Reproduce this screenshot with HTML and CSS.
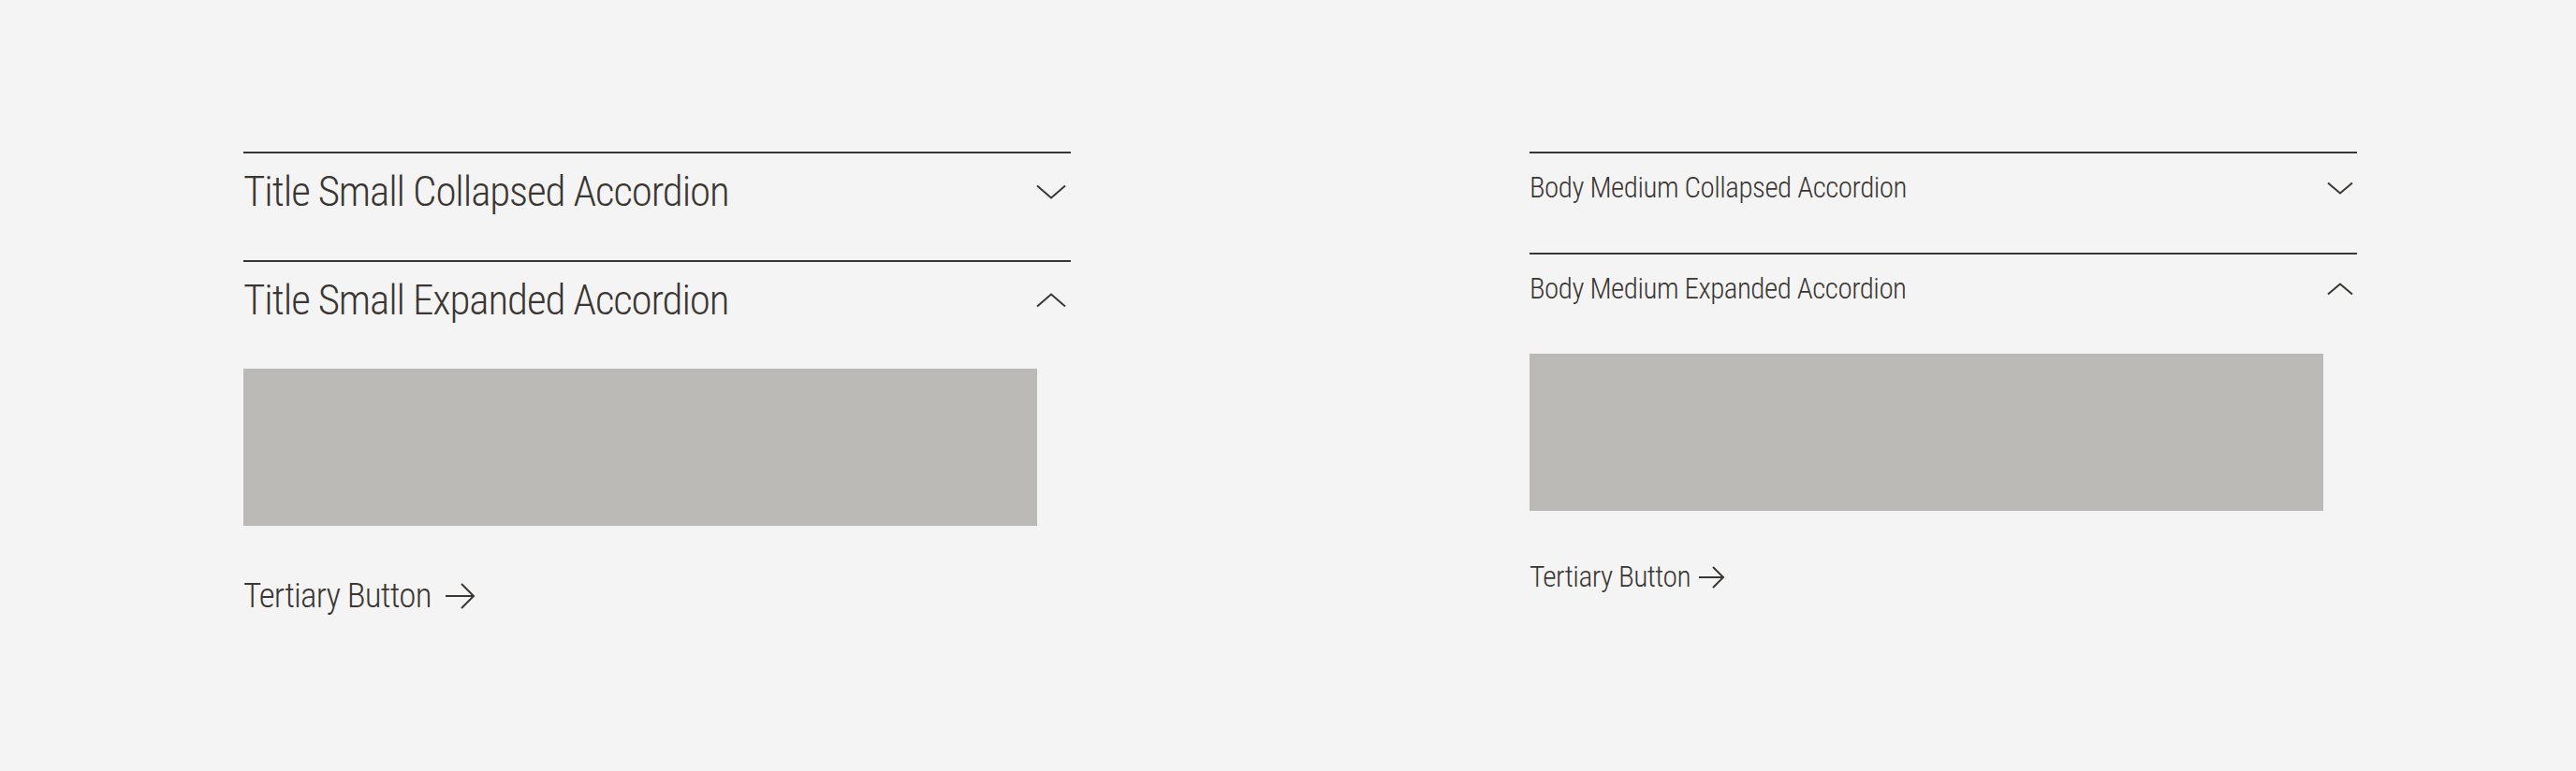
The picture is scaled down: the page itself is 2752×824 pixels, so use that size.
FILE: index.html
```html
<!DOCTYPE html>
<html lang="en">
<head>
    <meta charset="UTF-8">
    <meta name="viewport" content="width=device-width, initial-scale=1.0">
    <title>Accordion Variants</title>
    <link rel="stylesheet" href="styles.css">
</head>
<body>
    <main class="page">
        <section class="column column-title">
            <div class="accordion">
                <div class="accordion-item">
                    <div class="accordion-header">
                        <span class="accordion-label">Title Small Collapsed Accordion</span>
                        <svg class="chevron" width="32" height="16" viewBox="0 0 32 16">
                            <path d="M1 1.5 L16 14.5 L31 1.5" />
                        </svg>
                    </div>
                </div>
                <div class="accordion-item is-open">
                    <div class="accordion-header">
                        <span class="accordion-label">Title Small Expanded Accordion</span>
                        <svg class="chevron" width="32" height="16" viewBox="0 0 32 16">
                            <path d="M1 14.5 L16 1.5 L31 14.5" />
                        </svg>
                    </div>
                    <div class="accordion-panel">
                        <div class="placeholder"></div>
                    </div>
                </div>
            </div>
            <a class="tertiary-button" href="#">
                <span>Tertiary Button</span>
                <svg class="arrow" width="32" height="28" viewBox="0 0 32 28">
                    <path d="M0 14 H30 M17 1 L30 14 L17 27" />
                </svg>
            </a>
        </section>

        <section class="column column-body">
            <div class="accordion">
                <div class="accordion-item">
                    <div class="accordion-header">
                        <span class="accordion-label">Body Medium Collapsed Accordion</span>
                        <svg class="chevron" width="28" height="14" viewBox="0 0 28 14">
                            <path d="M1 1.5 L14 12.5 L27 1.5" />
                        </svg>
                    </div>
                </div>
                <div class="accordion-item is-open">
                    <div class="accordion-header">
                        <span class="accordion-label">Body Medium Expanded Accordion</span>
                        <svg class="chevron" width="28" height="14" viewBox="0 0 28 14">
                            <path d="M1 12.5 L14 1.5 L27 12.5" />
                        </svg>
                    </div>
                    <div class="accordion-panel">
                        <div class="placeholder"></div>
                    </div>
                </div>
            </div>
            <a class="tertiary-button" href="#">
                <span>Tertiary Button</span>
                <svg class="arrow" width="28" height="24" viewBox="0 0 28 24">
                    <path d="M0 12 H26 M15 1 L26 12 L15 23" />
                </svg>
            </a>
        </section>
    </main>
</body>
</html>
```

FILE: styles.css
```css
body {
    margin: 0;
    background-color: #f4f4f4;
    color: #3a3633;
    font-family: "Roboto Condensed", "Open Sans", sans-serif;
    font-stretch: 75%;
    font-weight: 300;
}

.page {
    display: flex;
    gap: 490px;
    padding: 162px 234px 0 260px;
}

.column {
    width: 884px;
    display: flex;
    flex-direction: column;
    align-items: flex-start;
}

.accordion {
    width: 100%;
}

.accordion-item {
    border-top: 2px solid #3a3633;
}

.accordion-header {
    display: flex;
    justify-content: space-between;
    align-items: center;
}

.chevron,
.arrow {
    fill: none;
    stroke: #3a3633;
    stroke-width: 2;
}

.placeholder {
    width: 848px;
    height: 168px;
    background-color: #bbbab6;
}

.tertiary-button {
    display: inline-flex;
    align-items: center;
    color: #3a3633;
    text-decoration: none;
    margin-top: 51px;
}

/* Title small variant */
.column-title .accordion-header {
    padding: 13px 0 45px;
    font-size: 45px;
    line-height: 56px;
    letter-spacing: -1.1px;
}

.column-title .chevron {
    margin-right: 5px;
}

.column-title .tertiary-button {
    font-size: 37px;
    line-height: 48px;
    letter-spacing: -0.8px;
    gap: 15px;
}

/* Body medium variant */
.column-body .accordion-header {
    padding: 17px 0 49px;
    font-size: 31px;
    line-height: 40px;
    letter-spacing: -0.5px;
}

.column-body .chevron {
    margin-right: 4px;
}

.column-body .tertiary-button {
    font-size: 31.5px;
    line-height: 40px;
    letter-spacing: -0.6px;
    gap: 9px;
}
```
